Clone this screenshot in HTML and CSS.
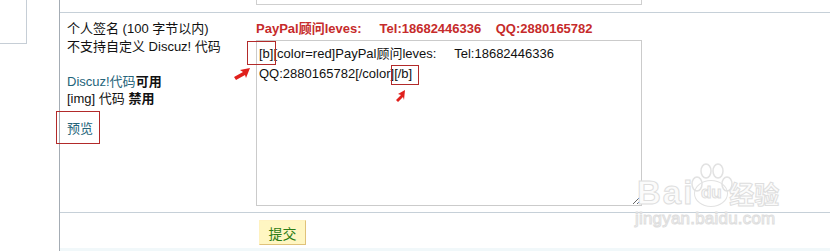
FILE: index.html
```html
<!DOCTYPE html>
<html lang="zh-CN">
<head>
<meta charset="utf-8">
<title>个人签名</title>
<link rel="stylesheet" href="styles.css">
</head>
<body>
<div class="page">
  <div class="side"><div class="side-box"></div></div>
  <div class="main">
    <div class="row row-prev">
      <div class="label"></div>
      <div class="field"><div class="prev-ta"></div></div>
    </div>
    <div class="row row-sig">
      <div class="label">
        <p>个人签名 (100 字节以内)</p>
        <p>不支持自定义 Discuz! 代码</p>
        <p>&nbsp;</p>
        <p><a class="lnk">Discuz!代码</a><b>可用</b></p>
        <p>[img] 代码 <b>禁用</b></p>
        <p class="preview"><a class="lnk">预览</a></p>
      </div>
      <div class="field">
        <div class="sig-preview">PayPal顾问leves:&nbsp;&nbsp;&nbsp;&nbsp; Tel:18682446336&nbsp;&nbsp;&nbsp; QQ:2880165782</div>
        <textarea class="sig-input">[b][color=red]PayPal顾问leves:     Tel:18682446336
QQ:2880165782[/color][/b]</textarea>
      </div>
    </div>
    <div class="row row-submit">
      <div class="label"></div>
      <div class="field"><button class="btn">提交</button></div>
    </div>
  </div>

  <div class="mark mark-b"></div>
  <div class="mark mark-cb"></div>
  <div class="mark mark-pv"></div>
  <svg class="arrow arrow-1" width="16" height="12" viewBox="0 0 16 12"><polygon points="16,0 6,2 9,4 0,9 2,12 11,7 12,10" fill="#e0201c"/></svg>
  <svg class="arrow arrow-2" width="11" height="12" viewBox="0 0 11 12"><polygon points="9,0 2,4 5,5 0,10 2,12 7,7 8,10" fill="#e0201c"/></svg>

  <div class="wm">
    <svg class="wm-paw" width="50" height="40" viewBox="0 0 50 40">
      <g fill="none" stroke="#e2e2e2" stroke-width="1.5">
        <ellipse cx="10" cy="22" rx="5" ry="7"/>
        <ellipse cx="19" cy="9" rx="5" ry="7"/>
        <ellipse cx="31" cy="9" rx="5" ry="7"/>
        <ellipse cx="40" cy="22" rx="5" ry="7"/>
      </g>
    </svg>
    <div class="wm-row"><span class="wm-bai">Bai</span><span class="wm-du">du</span><span class="wm-cn">经验</span></div>
    <div class="wm-url">jingyan.baidu.com</div>
  </div>
  <div class="foot"></div>
</div>
</body>
</html>
```

FILE: styles.css
```css
* { box-sizing: border-box; }
html, body { margin: 0; padding: 0; background: #fff; }
body {
  font-family: "Liberation Sans", "Noto Sans CJK SC", sans-serif;
  font-size: 13px;
  color: #111;
}
.page {
  position: relative;
  display: flex;
  width: 830px;
  height: 251px;
  overflow: hidden;
}
.side { width: 59px; flex: none; }
.side-box {
  width: 27px;
  height: 44px;
  border-right: 1px solid #c6ced6;
  border-bottom: 1px solid #c6ced6;
}
.main {
  flex: 1;
  border-left: 1px solid #a4acb4;
  display: flex;
  flex-direction: column;
}
.row { display: flex; border-bottom: 1px solid #c6d0d8; }
.label { width: 196px; flex: none; padding-left: 7px; }
.field { flex: 1; }

.row-prev { height: 13px; }
.prev-ta {
  width: 386px;
  height: 5px;
  border: 1px solid #cfcfcf;
  border-top: none;
}

.row-sig { height: 200px; }
.row-sig .label { padding-top: 7px; }
.label p { margin: 0; line-height: 17.5px; height: 17.5px; white-space: nowrap; }
.label b { font-weight: bold; }
.lnk { color: #24647a; text-decoration: none; }
.label .preview { margin-top: 12px; }
.row-sig .field { padding-top: 7px; }
.sig-preview {
  color: #c62b2b;
  font-weight: bold;
  font-size: 13px;
  line-height: 17px;
  white-space: nowrap;
}
.sig-input {
  display: block;
  margin-top: 3px;
  width: 386px;
  height: 166px;
  border: 1px solid #cbcbcb;
  padding: 3px 2px;
  font-family: "Liberation Sans", "Noto Sans CJK SC", sans-serif;
  font-size: 13px;
  line-height: 20px;
  color: #111;
  background: #fff;
  resize: both;
  outline: none;
}

.row-submit { border-bottom: none; flex: 1; }
.row-submit .field { padding: 7px 0 0 3px; }
.btn {
  width: 47px;
  height: 25px;
  padding: 0;
  border: 1px solid #fff2c0;
  border-right-color: #e0c27a;
  border-bottom-color: #e0c27a;
  background: #fff6c2;
  color: #2c7c14;
  font-family: "Noto Sans CJK SC", sans-serif;
  font-size: 14px;
  line-height: 22px;
}

.mark { position: absolute; border: 1px solid #b22a2a; }
.mark-b { left: 247px; top: 41px; width: 29px; height: 24px; }
.mark-cb { left: 391px; top: 65px; width: 28px; height: 20px; }
.mark-pv { left: 56px; top: 111px; width: 44px; height: 33px; }
.arrow { position: absolute; }
.arrow-1 { left: 234px; top: 68px; }
.arrow-2 { left: 396px; top: 90px; }

.wm { position: absolute; left: 637px; top: 162px; width: 152px; }
.wm-paw { position: absolute; left: 50px; top: 0; }
.wm-row {
  position: relative;
  margin-top: 16px;
  display: flex;
  align-items: center;
  white-space: nowrap;
}
.wm-bai, .wm-cn, .wm-url {
  color: #fbfbfb;
  -webkit-text-stroke: 1px #dedede;
  font-weight: bold;
}
.wm-bai { font-size: 33px; line-height: 30px; letter-spacing: 2px; font-family: "Liberation Sans", sans-serif; }
.wm-du {
  display: inline-block;
  width: 34px;
  height: 27px;
  margin: 0 1px 0 0;
  border: 1.5px solid #e2e2e2;
  border-radius: 50%;
  font-size: 17px;
  line-height: 24px;
  text-align: center;
  color: #fbfbfb;
  -webkit-text-stroke: 1px #dedede;
  font-weight: bold;
}
.wm-cn { font-size: 25px; line-height: 28px; font-family: "Noto Sans CJK SC", sans-serif; }
.wm-url {
  position: relative;
  font-size: 17px;
  line-height: 20px;
  margin-top: 1px;
  margin-left: -2px;
  font-family: "Liberation Sans", sans-serif;
  font-weight: normal;
  letter-spacing: 0.2px;
}
.foot {
  position: absolute;
  left: 60px;
  right: 0;
  bottom: 0;
  height: 3px;
  background: #f1f8fa;
}
```
